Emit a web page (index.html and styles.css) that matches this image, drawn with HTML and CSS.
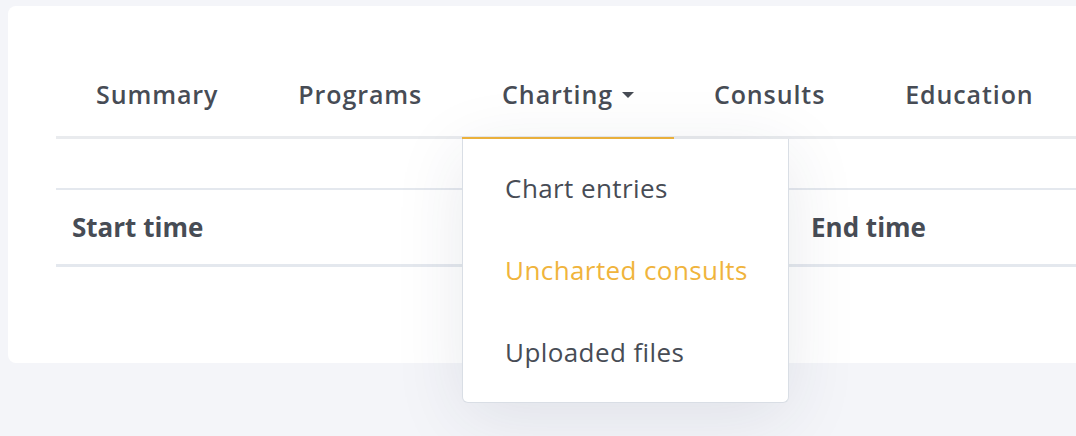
FILE: index.html
```html
<!DOCTYPE html>
<html lang="en">
<head>
<meta charset="utf-8">
<title>Charting</title>
<link rel="stylesheet" href="styles.css">
</head>
<body>
<div class="card">
  <nav class="tabs">
    <a class="tab">Summary</a>
    <a class="tab">Programs</a>
    <div class="tab tab-active">
      <span>Charting</span>
      <svg class="caret" width="12" height="6" viewBox="0 0 12 6"><path d="M0 0 H12 L6 6 Z" fill="#474c55"/></svg>
      <div class="dropdown">
        <a class="dd-item">Chart entries</a>
        <a class="dd-item dd-active">Uncharted consults</a>
        <a class="dd-item">Uploaded files</a>
      </div>
    </div>
    <a class="tab">Consults</a>
    <a class="tab">Education</a>
  </nav>
  <table class="table">
    <thead>
      <tr>
        <th class="col-start">Start time</th>
        <th>End time</th>
      </tr>
    </thead>
  </table>
</div>
</body>
</html>
```

FILE: styles.css
```css
html, body {
  margin: 0;
  padding: 0;
  overflow: hidden;
}
body {
  background: #f4f5f9;
  font-family: "Open Sans", "Noto Sans", sans-serif;
  color: #474c55;
  width: 1076px;
  height: 436px;
}
.card {
  margin: 6px 0 0 8px;
  width: 1120px;
  height: 357px;
  box-sizing: border-box;
  background: #ffffff;
  border-radius: 8px;
  padding: 40px 0 0 48px;
}
.tabs {
  display: flex;
  border-bottom: 3px solid #e9ebee;
  height: 90px;
  box-sizing: content-box;
}
.tab {
  position: relative;
  display: flex;
  align-items: center;
  padding: 6px 40px 0;
  font-size: 25px;
  font-weight: 600;
  color: #474c55;
  letter-spacing: 0.9px;
}
.tab-active::after {
  content: "";
  position: absolute;
  left: 0;
  right: 0;
  bottom: -3px;
  height: 2px;
  background: #f0b43c;
}
.caret {
  margin-left: 9px;
  margin-top: 2px;
}
.dropdown {
  position: absolute;
  top: 93px;
  left: 0;
  width: 327px;
  box-sizing: border-box;
  background: #ffffff;
  border: 1.5px solid #d9dee5;
  border-top: none;
  border-radius: 0 0 6px 6px;
  padding: 8px 0 9px;
  box-shadow: 0 14px 70px rgba(40, 50, 80, 0.1);
  z-index: 5;
  letter-spacing: 0;
}
.dd-item {
  display: flex;
  align-items: center;
  height: 82px;
  padding-left: 42px;
  font-size: 26px;
  font-weight: 400;
  letter-spacing: 0.4px;
  color: #474c55;
}
.dd-active {
  color: #f0b43c;
}
.table {
  margin-top: 49px;
  border-collapse: collapse;
  width: 1072px;
}
.table th {
  text-align: left;
  font-size: 26px;
  font-weight: 700;
  color: #474c55;
  padding: 0 16px;
  height: 74px;
  border-top: 2px solid #e4e8ee;
  border-bottom: 3px solid #e4e8ee;
}
.col-start {
  width: 707px;
}
```
